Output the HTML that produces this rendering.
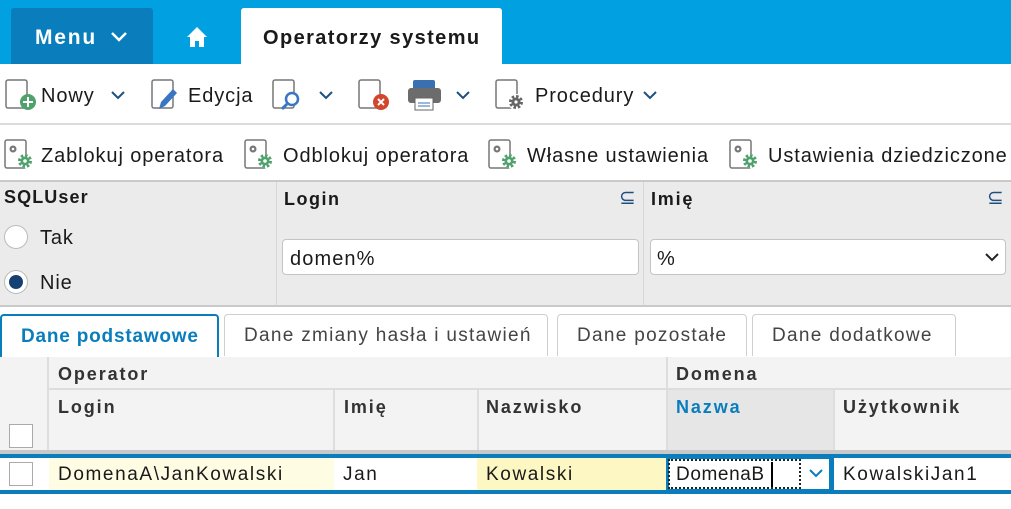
<!DOCTYPE html>
<html><head><meta charset="utf-8"><style>
*{box-sizing:border-box;margin:0;padding:0}
body{width:1011px;height:509px;position:relative;overflow:hidden;background:#fff;font-family:"Liberation Sans",sans-serif;color:#1a1a1a}
.a{position:absolute;white-space:nowrap}
.t{font-size:20px;letter-spacing:0.9px}
.b{font-weight:bold}
.h{font-weight:bold;font-size:18px;color:#333;letter-spacing:1.9px}
.r{font-size:19px;letter-spacing:1.6px}
.tab{font-size:19px;letter-spacing:1.3px}
svg{position:absolute}
</style></head><body>
<div class="a" style="left:0;top:0;width:1011px;height:64px;background:#00a0e1"></div>
<div class="a" style="left:11px;top:8px;width:142px;height:56px;background:#0a7dbd;border-radius:3px 3px 0 0"></div>
<div class="a b" style="left:35px;top:26px;font-size:21px;color:#fff;letter-spacing:1.8px">Menu</div>
<svg style="left:110px;top:31px" width="18" height="12"><path d="M2 2l7 7 7-7" stroke="#fff" stroke-width="2.5" fill="none"/></svg>
<svg style="left:186px;top:26px" width="22" height="22"><path d="M11 1L1 11h3v10h5v-6h4v6h5V11h3z" fill="#fff"/></svg>
<div class="a" style="left:241px;top:8px;width:261px;height:56px;background:#fff;border-radius:3px 3px 0 0"></div>
<div class="a b" style="left:263px;top:27px;font-size:20px;letter-spacing:1.4px">Operatorzy systemu</div>

<!-- toolbar 1 -->
<svg style="left:5px;top:79px" width="32" height="32"><rect x="1" y="1" width="21" height="28" rx="2" fill="none" stroke="#777" stroke-width="1.5"/><circle cx="23" cy="23" r="8" fill="#4fa26c"/><path d="M23 18v10M18 23h10" stroke="#fff" stroke-width="2"/></svg>
<div class="a t" style="left:41px;top:85px">Nowy</div>
<svg style="left:110px;top:90px" width="16" height="10"><path d="M2 2l6 6 6-6" stroke="#1f4f7f" stroke-width="2" fill="none"/></svg>
<svg style="left:151px;top:79px" width="32" height="32"><rect x="1" y="1" width="21" height="28" rx="2" fill="none" stroke="#777" stroke-width="1.5"/><path d="M8 30l2-7 12-13 4 4-12 13z" fill="#3a75c4"/></svg>
<div class="a t" style="left:188px;top:85px">Edycja</div>
<svg style="left:272px;top:79px" width="32" height="32"><rect x="1" y="1" width="21" height="28" rx="2" fill="none" stroke="#777" stroke-width="1.5"/><circle cx="20" cy="20" r="6" fill="#fff" stroke="#3a75c4" stroke-width="2.5"/><path d="M15 25l-5 5" stroke="#3a75c4" stroke-width="3"/></svg>
<svg style="left:318px;top:90px" width="16" height="10"><path d="M2 2l6 6 6-6" stroke="#1f4f7f" stroke-width="2" fill="none"/></svg>
<svg style="left:358px;top:79px" width="32" height="32"><rect x="1" y="1" width="21" height="28" rx="2" fill="none" stroke="#777" stroke-width="1.5"/><circle cx="23" cy="23" r="8" fill="#d2462b"/><path d="M20 20l6 6M26 20l-6 6" stroke="#fff" stroke-width="2"/></svg>
<svg style="left:407px;top:79px" width="36" height="32"><rect x="6" y="1" width="22" height="10" rx="2" fill="#3a6fb0"/><rect x="1" y="9" width="33" height="15" rx="3" fill="#6c6c6c"/><rect x="8" y="19" width="18" height="12" fill="#fff" stroke="#666"/><path d="M11 24h12M11 27h12" stroke="#3a6fb0"/></svg>
<svg style="left:455px;top:90px" width="16" height="10"><path d="M2 2l6 6 6-6" stroke="#1f4f7f" stroke-width="2" fill="none"/></svg>
<svg style="left:495px;top:79px" width="32" height="32"><rect x="1" y="1" width="21" height="28" rx="2" fill="none" stroke="#777" stroke-width="1.5"/><circle cx="21" cy="23" r="8" fill="#fff"/><circle cx="21" cy="23" r="5.5" fill="none" stroke="#666" stroke-width="3" stroke-dasharray="2.5 1.8"/><circle cx="21" cy="23" r="4.5" fill="#666"/><circle cx="21" cy="23" r="1.6" fill="#fff"/></svg>
<div class="a t" style="left:535px;top:85px">Procedury</div>
<svg style="left:642px;top:90px" width="16" height="10"><path d="M2 2l6 6 6-6" stroke="#1f4f7f" stroke-width="2" fill="none"/></svg>
<div class="a" style="left:0;top:123px;width:1011px;height:2px;background:#dcdcdc"></div>

<!-- toolbar 2 -->
<svg style="left:4px;top:139px" width="30" height="32"><rect x="1" y="1" width="21" height="28" rx="2" fill="none" stroke="#777" stroke-width="1.5"/><circle cx="9" cy="10" r="3.5" fill="#777"/><circle cx="9" cy="10" r="1.3" fill="#fff"/><circle cx="21" cy="22" r="7" fill="#fff"/><circle cx="21" cy="22" r="5.5" fill="none" stroke="#4fa26c" stroke-width="3" stroke-dasharray="2.5 1.8"/><circle cx="21" cy="22" r="4.5" fill="#4fa26c"/><circle cx="21" cy="22" r="1.8" fill="#fff"/></svg>
<div class="a t" style="left:41px;top:145px">Zablokuj operatora</div>
<svg style="left:244px;top:139px" width="30" height="32"><rect x="1" y="1" width="21" height="28" rx="2" fill="none" stroke="#777" stroke-width="1.5"/><circle cx="9" cy="10" r="3.5" fill="#777"/><circle cx="9" cy="10" r="1.3" fill="#fff"/><circle cx="21" cy="22" r="7" fill="#fff"/><circle cx="21" cy="22" r="5.5" fill="none" stroke="#4fa26c" stroke-width="3" stroke-dasharray="2.5 1.8"/><circle cx="21" cy="22" r="4.5" fill="#4fa26c"/><circle cx="21" cy="22" r="1.8" fill="#fff"/></svg>
<div class="a t" style="left:283px;top:145px">Odblokuj operatora</div>
<svg style="left:488px;top:139px" width="30" height="32"><rect x="1" y="1" width="21" height="28" rx="2" fill="none" stroke="#777" stroke-width="1.5"/><circle cx="9" cy="10" r="3.5" fill="#777"/><circle cx="9" cy="10" r="1.3" fill="#fff"/><circle cx="21" cy="22" r="7" fill="#fff"/><circle cx="21" cy="22" r="5.5" fill="none" stroke="#4fa26c" stroke-width="3" stroke-dasharray="2.5 1.8"/><circle cx="21" cy="22" r="4.5" fill="#4fa26c"/><circle cx="21" cy="22" r="1.8" fill="#fff"/></svg>
<div class="a t" style="left:527px;top:145px">Własne ustawienia</div>
<svg style="left:729px;top:139px" width="30" height="32"><rect x="1" y="1" width="21" height="28" rx="2" fill="none" stroke="#777" stroke-width="1.5"/><circle cx="9" cy="10" r="3.5" fill="#777"/><circle cx="9" cy="10" r="1.3" fill="#fff"/><circle cx="21" cy="22" r="7" fill="#fff"/><circle cx="21" cy="22" r="5.5" fill="none" stroke="#4fa26c" stroke-width="3" stroke-dasharray="2.5 1.8"/><circle cx="21" cy="22" r="4.5" fill="#4fa26c"/><circle cx="21" cy="22" r="1.8" fill="#fff"/></svg>
<div class="a t" style="left:768px;top:145px">Ustawienia dziedziczone</div>

<!-- filter panel -->
<div class="a" style="left:0;top:180px;width:1011px;height:127px;background:#ebebeb;border-top:2px solid #c9c9c9;border-bottom:2px solid #c9c9c9"></div>
<div class="a" style="left:276px;top:182px;width:1px;height:123px;background:#d6d6d6"></div>
<div class="a" style="left:643px;top:182px;width:1px;height:123px;background:#d6d6d6"></div>
<div class="a b" style="left:4px;top:187px;font-size:18px;letter-spacing:1.1px">SQLUser</div>
<div class="a" style="left:4px;top:225px;width:24px;height:24px;border-radius:50%;background:#fff;border:1.5px solid #bbb"></div>
<div class="a t" style="left:40px;top:227px">Tak</div>
<div class="a" style="left:4px;top:270px;width:24px;height:24px;border-radius:50%;background:#fff;border:1.5px solid #bbb"></div>
<div class="a" style="left:9px;top:275px;width:14px;height:14px;border-radius:50%;background:#163f73"></div>
<div class="a t" style="left:40px;top:272px">Nie</div>
<div class="a b" style="left:284px;top:189px;font-size:18px;letter-spacing:1.5px">Login</div>
<div class="a" style="left:619px;top:185px;font-size:20px;color:#1f4f7f">⊆</div>
<div class="a" style="left:282px;top:239px;width:357px;height:36px;background:#fff;border:1.5px solid #c4c4c4;border-radius:4px"></div>
<div class="a" style="left:290px;top:248px;font-size:20px;letter-spacing:1.1px">domen%</div>
<div class="a b" style="left:651px;top:189px;font-size:18px;letter-spacing:1.8px">Imię</div>
<div class="a" style="left:987px;top:185px;font-size:20px;color:#1f4f7f">⊆</div>
<div class="a" style="left:650px;top:239px;width:356px;height:36px;background:#fff;border:1.5px solid #c4c4c4;border-radius:4px"></div>
<div class="a t" style="left:657px;top:248px">%</div>
<svg style="left:984px;top:252px" width="16" height="10"><path d="M2 2l6 6 6-6" stroke="#222" stroke-width="2" fill="none"/></svg>

<!-- tabs -->
<div class="a b" style="left:0;top:314px;width:219px;height:44px;border:2px solid #0a7dbd;border-bottom:none;border-radius:4px 4px 0 0;background:#fff;color:#0a7dbd;font-size:19px;letter-spacing:0.8px;padding:10px 0 0 19px">Dane podstawowe</div>
<div class="a tab" style="left:224px;top:314px;width:324px;height:42px;border:1.5px solid #cfcfcf;border-bottom:none;border-radius:4px 4px 0 0;color:#444;padding:10px 0 0 19px">Dane zmiany hasła i ustawień</div>
<div class="a tab" style="left:557px;top:314px;width:190px;height:42px;border:1.5px solid #cfcfcf;border-bottom:none;border-radius:4px 4px 0 0;color:#444;padding:10px 0 0 19px">Dane pozostałe</div>
<div class="a tab" style="left:752px;top:314px;width:204px;height:42px;border:1.5px solid #cfcfcf;border-bottom:none;border-radius:4px 4px 0 0;color:#444;padding:10px 0 0 19px">Dane dodatkowe</div>

<!-- grid header -->
<div class="a" style="left:0;top:357px;width:1011px;height:94px;background:#f3f3f3"></div>
<div class="a" style="left:47px;top:357px;width:2px;height:94px;background:#ddd"></div>
<div class="a" style="left:49px;top:388px;width:962px;height:2px;background:#ddd"></div>
<div class="a" style="left:666px;top:357px;width:2px;height:94px;background:#ddd"></div>
<div class="a" style="left:668px;top:390px;width:165px;height:61px;background:#e6e6e6"></div>
<div class="a" style="left:333px;top:390px;width:2px;height:61px;background:#ddd"></div>
<div class="a" style="left:477px;top:390px;width:2px;height:61px;background:#ddd"></div>
<div class="a" style="left:833px;top:390px;width:2px;height:61px;background:#ddd"></div>
<div class="a h" style="left:58px;top:364px">Operator</div>
<div class="a h" style="left:676px;top:364px">Domena</div>
<div class="a h" style="left:58px;top:397px">Login</div>
<div class="a h" style="left:344px;top:397px">Imię</div>
<div class="a h" style="left:486px;top:397px">Nazwisko</div>
<div class="a h" style="left:676px;top:397px;color:#0a7dbd">Nazwa</div>
<div class="a h" style="left:843px;top:397px">Użytkownik</div>
<div class="a" style="left:9px;top:424px;width:24px;height:24px;background:#fff;border:1.5px solid #aaa"></div>
<div class="a" style="left:0;top:450px;width:1011px;height:4px;background:#c9c9c9"></div>

<!-- row -->
<div class="a" style="left:0;top:454px;width:1011px;height:40px;background:#0a7dbd"></div>
<div class="a" style="left:0;top:458px;width:1011px;height:32px;background:#fff"></div>
<div class="a" style="left:9px;top:462px;width:24px;height:24px;background:#fff;border:1.5px solid #aaa"></div>
<div class="a" style="left:49px;top:458px;width:285px;height:32px;background:#fefde3"></div>
<div class="a" style="left:477px;top:458px;width:190px;height:32px;background:#fdf7c4"></div>
<div class="a" style="left:666px;top:458px;width:168px;height:32px;background:#0a7dbd"></div>
<div class="a" style="left:669px;top:459px;width:160px;height:30px;background:#fff"></div>
<div class="a" style="left:668px;top:459px;width:133px;height:30px;border:2px dotted #222"></div>
<svg style="left:808px;top:468px" width="16" height="10"><path d="M2 2l6 6 6-6" stroke="#0a7dbd" stroke-width="2" fill="none"/></svg>
<div class="a r" style="left:58px;top:464px">DomenaA\JanKowalski</div>
<div class="a r" style="left:343px;top:464px">Jan</div>
<div class="a r" style="left:486px;top:464px">Kowalski</div>
<div class="a r" style="left:676px;top:464px;letter-spacing:0.6px">DomenaB</div>
<div class="a" style="left:771px;top:462px;width:2px;height:25px;background:#000"></div>
<div class="a r" style="left:843px;top:464px">KowalskiJan1</div>
</body></html>
